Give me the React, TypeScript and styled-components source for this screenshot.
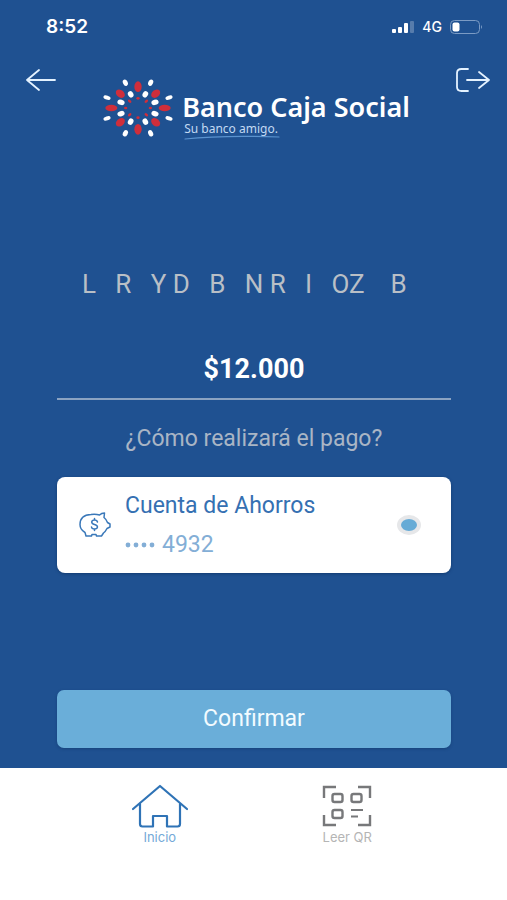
import React, { useState } from 'react';
import styled, { createGlobalStyle } from 'styled-components';

const GlobalStyle = createGlobalStyle`
  *, *::before, *::after { box-sizing: border-box; }
  body { margin: 0; background: #ffffff; font-family: Roboto, "Liberation Sans", sans-serif; }
  button, input { font: inherit; }
`;

const Screen = styled.div`
  min-height: 100vh;
  display: flex;
  flex-direction: column;
  background: #1f5191;
`;

const StatusBar = styled.div`
  height: 54px;
  padding: 0 24px 0 46px;
  display: flex;
  align-items: center;
  justify-content: space-between;
  color: #ffffff;
`;

const Clock = styled.time`
  font: 600 19px/24px Inter, sans-serif;
`;

const Indicators = styled.div`
  display: flex;
  align-items: center;
  gap: 8px;
  font: 500 14px/20px Inter, sans-serif;
`;

const Header = styled.header`
  display: flex;
  align-items: flex-start;
  justify-content: space-between;
  padding: 10px 16px 0 24px;
`;

const IconButton = styled.button`
  display: flex;
  padding: 0;
  border: 0;
  background: none;
  cursor: pointer;
`;

const Brand = styled.div`
  display: flex;
  align-items: flex-start;
  gap: 8px;
  padding-top: 15px;
`;

const BrandText = styled.div`
  display: flex;
  flex-direction: column;
  padding-top: 12px;
  font-family: "Noto Sans", "Open Sans", sans-serif;
`;

const BrandName = styled.span`
  font-size: 27px;
  line-height: 32px;
  font-weight: 600;
  color: #ffffff;
  white-space: nowrap;
`;

const Slogan = styled.span`
  padding-left: 2px;
  font-size: 12px;
  line-height: 12px;
  color: #c3daf3;
`;

const Content = styled.main`
  flex: 1;
  display: flex;
  flex-direction: column;
  padding: 128px 56px 20px 57px;
`;

const Recipient = styled.p`
  margin: 0;
  font-size: 26px;
  line-height: 32px;
  text-align: center;
  white-space: pre;
  color: #b9bfc6;
`;

const Amount = styled.input`
  width: 100%;
  height: 60px;
  margin-top: 40px;
  padding: 0;
  border: 0;
  border-bottom: 2px solid #8ba3c2;
  background: none;
  font-size: 27px;
  font-weight: 700;
  text-align: center;
  color: #ffffff;
  outline: none;
`;

const Question = styled.p`
  margin: 24px 0;
  font-size: 23px;
  line-height: 29px;
  text-align: center;
  color: #a9b5c5;
`;

const AccountCard = styled.label`
  min-height: 96px;
  padding: 8px 30px 8px 22px;
  display: flex;
  align-items: center;
  border-radius: 8px;
  background: #ffffff;
  box-shadow: 0 1px 3px rgba(8, 40, 84, 0.5);
  cursor: pointer;
`;

const AccountText = styled.span`
  flex: 1;
  display: flex;
  flex-direction: column;
  padding-left: 14px;
`;

const AccountName = styled.span`
  font-size: 23px;
  line-height: 39px;
  color: #3570b2;
`;

const AccountNumber = styled.span`
  display: flex;
  align-items: center;
  gap: 6px;
  font-size: 23px;
  line-height: 39px;
  color: #83aed6;
`;

const Radio = styled.input`
  appearance: none;
  width: 24px;
  height: 20px;
  margin: 0;
  border: 4px solid #e6e7e9;
  border-radius: 50%;
  background: #ffffff;
  &:checked { background: #66abd6; }
`;

const Confirm = styled.button`
  width: 100%;
  min-height: 58px;
  margin-top: auto;
  border: 0;
  border-radius: 7px;
  background: #6aaed9;
  box-shadow: 0 1px 3px rgba(8, 40, 84, 0.35);
  color: #f2fbff;
  font-size: 23px;
  line-height: 28px;
  cursor: pointer;
`;

const TabBar = styled.nav`
  display: grid;
  grid-template-columns: 1fr 1fr;
  min-height: 132px;
  padding: 16px 66px 0;
  background: #ffffff;
`;

const Tab = styled.a<{ $active?: boolean }>`
  display: flex;
  flex-direction: column;
  align-items: center;
  font: 400 13px/14px Inter, sans-serif;
  text-decoration: none;
  color: ${({ $active }) => ($active ? '#73a9d8' : '#b5b5b5')};
`;

type Petal = [x: number, y: number, rx: number, ry: number, color: string];

const RED = '#cf2e3b';
const WHITE = '#ffffff';

const quadrantPetals: Petal[] = [
  [53, 43, 15, 11, RED],
  [38, 76, 10, 7, WHITE],
  [93, 31, 11, 6, WHITE],
  [22, 41, 10, 8, WHITE],
  [51, 17, 11, 8, WHITE],
  [25, 20, 6, 4, RED],
];

const axisPetals: Petal[] = [
  [0, 64, 16, 11, RED],
  [80, 0, 18, 10, RED],
  [0, 29, 4, 5, RED],
  [37, 0, 5, 4, RED],
];

const petals: Petal[] = [
  ...quadrantPetals.flatMap(([x, y, rx, ry, c]): Petal[] =>
    [[1, 1], [1, -1], [-1, 1], [-1, -1]].map(([sx, sy]): Petal => [x * sx, y * sy, rx, ry, c]),
  ),
  ...axisPetals.flatMap(([x, y, rx, ry, c]): Petal[] => [[x, y, rx, ry, c], [-x, -y, rx, ry, c]]),
];

const BrandMark = () => (
  <svg width="72" height="58" viewBox="-108 -87 216 174" aria-hidden="true">
    {petals.map(([x, y, rx, ry, color], i) => (
      <ellipse
        key={i}
        rx={rx}
        ry={ry}
        fill={color}
        transform={`translate(${x} ${y}) rotate(${(Math.atan2(y, x) * 180) / Math.PI})`}
      />
    ))}
  </svg>
);

const BackIcon = () => (
  <svg width="33" height="32" viewBox="0 0 33 32" fill="none" stroke="#e4f2ff" strokeWidth="1.8" strokeLinecap="round" strokeLinejoin="round">
    <path d="M31 16H3M15 6 3 16l12 10" />
  </svg>
);

const ExitIcon = () => (
  <svg width="36" height="32" viewBox="0 0 36 32" fill="none" stroke="#e4f2ff" strokeWidth="1.8" strokeLinecap="round" strokeLinejoin="round">
    <path d="M13 5H6.500Q2 5 2 9v14q0 4 4.500 4H13M12 16h22M24 8l10 8-10 8" />
  </svg>
);

const SignalIcon = () => (
  <svg width="22" height="12" viewBox="0 0 22 12" fill="#ffffff" aria-hidden="true">
    <rect y="8" width="4" height="4" rx="1" />
    <rect x="6" y="6" width="4" height="6" rx="1" />
    <rect x="12" y="2" width="4" height="10" rx="1" />
    <rect x="18" width="4" height="12" rx="1" opacity="0.25" />
  </svg>
);

const BatteryIcon = () => (
  <svg width="33" height="14" viewBox="0 0 33 14" aria-hidden="true">
    <rect x="0.500" y="0.500" width="29" height="13" rx="4" fill="none" stroke="#7b9bc4" />
    <rect x="2.500" y="2.500" width="7" height="9" rx="2" fill="#ffffff" />
    <path d="M31 5q2 2 0 4z" fill="#7b9bc4" />
  </svg>
);

const Underline = () => (
  <svg width="98" height="5" viewBox="0 0 98 5" fill="none" aria-hidden="true">
    <path d="M3 4Q40 0 97 2" stroke="#5b93cf" strokeWidth="1.2" strokeLinecap="round" />
  </svg>
);

const PiggyIcon = () => (
  <svg width="32" height="26" viewBox="0 0 32 26" fill="none" stroke="#3a78b9" strokeWidth="1.500" strokeLinejoin="round" strokeLinecap="round" aria-hidden="true">
    <path d="M7 24 6 20.500Q1 17.500 1 12.500 1 3 12 2.500q5-.500 8.500.500Q22.500 1 25.500 1L25 5.500Q27.500 7.500 28.500 10.500l2.500 1.500v3l-3 1.500q-1.500 3-3.500 4.500L22.500 24h-5L17 22.500h-4L12.500 24z" />
    <path d="M18.500 10q-.500-2-3-2t-2.800 2q0 1.800 2.800 2.400t3 2.600q-.300 2-3 2t-3-2M15.500 6.500V8M15.500 17v1.500" />
  </svg>
);

const MaskDots = () => (
  <svg width="31" height="6" viewBox="0 0 31 6" fill="#83aed6" role="img" aria-label="terminada en">
    {[3, 11, 19, 27].map((x) => (
      <circle key={x} cx={x} cy="3" r="2.400" />
    ))}
  </svg>
);

const HomeIcon = () => (
  <svg width="58" height="46" viewBox="0 0 58 46" fill="none" stroke="#2f73b6" strokeWidth="2.200" strokeLinejoin="round" strokeLinecap="round" aria-hidden="true">
    <path d="M2 25 29 2l27 23" />
    <path d="M9 20v20q0 2.500 2.500 2.500H22V32h14v10.500h10.500Q49 42.500 49 40V20" />
  </svg>
);

const QrIcon = () => (
  <svg width="50" height="46" viewBox="0 0 50 46" fill="none" stroke="#77787a" strokeWidth="2.400" aria-hidden="true">
    <path d="M14 3H2v11M36 3h12v11M2 31v10h12M48 31v10H36" />
    <rect x="10.500" y="10" width="10" height="8" rx="2" />
    <rect x="29.500" y="10" width="10" height="8" rx="2" />
    <rect x="10.500" y="26" width="10" height="8" rx="2" />
    <path d="M29 26h12M29 32.500h7" strokeWidth="2" />
  </svg>
);

export default function App() {
  const [amount, setAmount] = useState('$12.000');

  return (
    <>
      <GlobalStyle />
      <Screen>
        <StatusBar>
          <Clock>8:52</Clock>
          <Indicators>
            <SignalIcon />
            4G
            <BatteryIcon />
          </Indicators>
        </StatusBar>
        <Header>
          <IconButton type="button" aria-label="Volver"><BackIcon /></IconButton>
          <Brand>
            <BrandMark />
            <BrandText>
              <BrandName>Banco Caja Social</BrandName>
              <Slogan>Su banco amigo.</Slogan>
              <Underline />
            </BrandText>
          </Brand>
          <IconButton type="button" aria-label="Salir"><ExitIcon /></IconButton>
        </Header>
        <Content>
          <Recipient>{'L   R   Y D   B   N R   I   OZ    B   '}</Recipient>
          <Amount aria-label="Valor" value={amount} onChange={(e) => setAmount(e.target.value)} />
          <Question>¿Cómo realizará el pago?</Question>
          <AccountCard>
            <PiggyIcon />
            <AccountText>
              <AccountName>Cuenta de Ahorros</AccountName>
              <AccountNumber><MaskDots />4932</AccountNumber>
            </AccountText>
            <Radio type="radio" name="cuenta" defaultChecked />
          </AccountCard>
          <Confirm type="button">Confirmar</Confirm>
        </Content>
        <TabBar>
          <Tab href="#inicio" $active><HomeIcon />Inicio</Tab>
          <Tab href="#qr"><QrIcon />Leer QR</Tab>
        </TabBar>
      </Screen>
    </>
  );
}
